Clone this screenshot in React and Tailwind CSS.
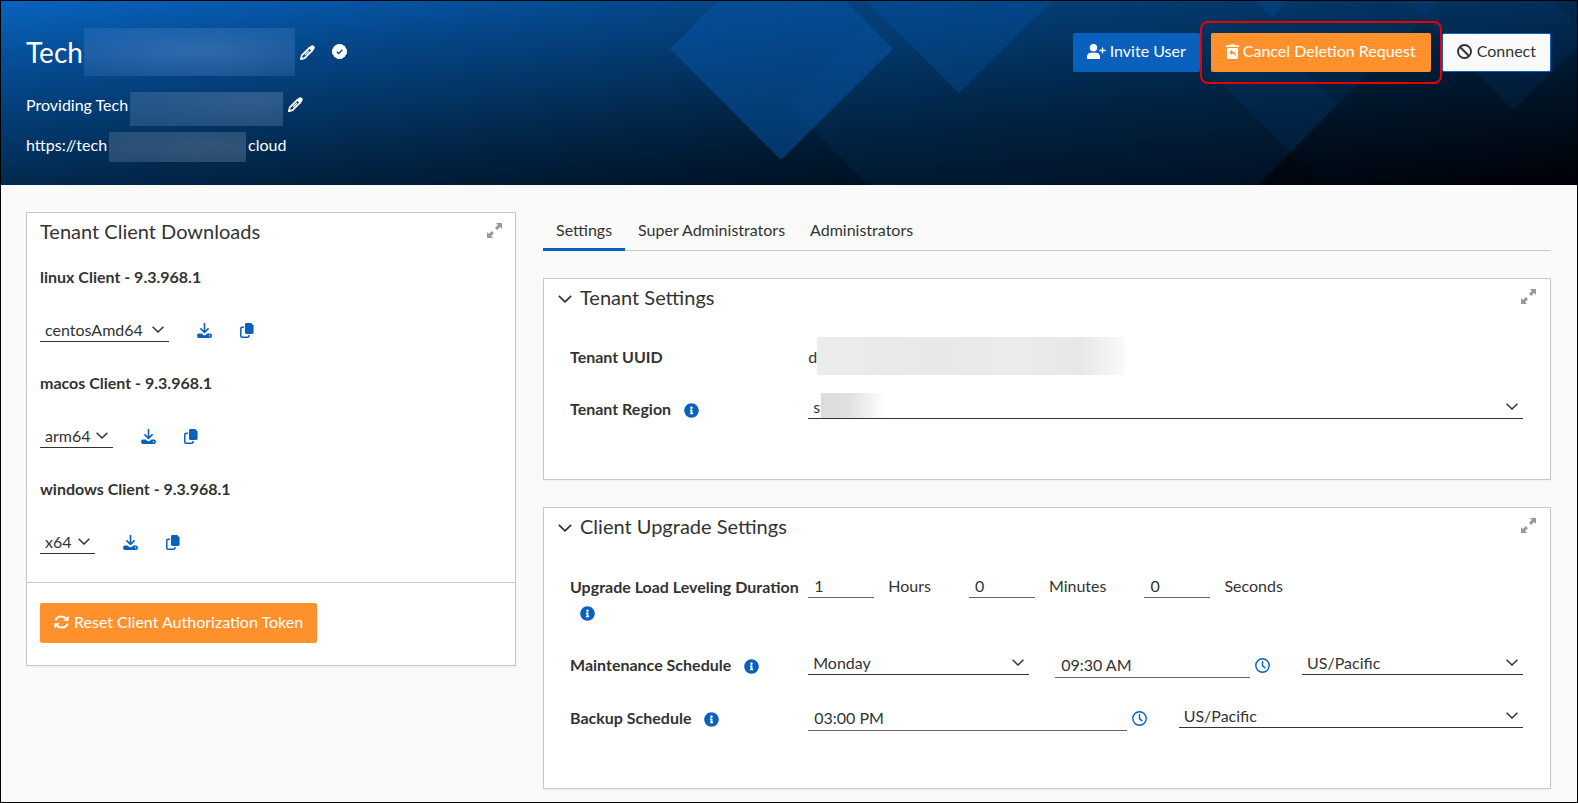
import React from "react";
import { FaInfoCircle } from "react-icons/fa";

function Pencil() {
  return (
    <svg viewBox="0 0 15 15" className="size-[15px]" aria-hidden="true">
      <path d="M0.9 14.1 L1.8 10.4 L9.6 2.6 L12.4 5.4 L4.6 13.2 Z" fill="none" stroke="currentColor" strokeWidth="1.7" strokeLinejoin="round" />
      <path d="M8.6 2.9 L10.9 0.8 Q12.6 -0.4 14 1 Q15.4 2.4 14.2 4.1 L12.1 6.4 Z" fill="currentColor" />
      <path d="M5 10 L9 6" stroke="currentColor" strokeWidth="1.1" />
      <path d="M0.2 14.8 L1.1 11.4 L3.6 13.9 Z" fill="currentColor" />
    </svg>
  );
}

function Verified() {
  return (
    <svg viewBox="0 0 15 15" className="size-[15px]" aria-hidden="true">
      <g fill="currentColor">
        <circle cx="7.5" cy="7.5" r="7" />
        <rect x="1.6" y="1.6" width="11.8" height="11.8" rx="1.8" transform="rotate(0 7.5 7.5)" />
        <rect x="1.6" y="1.6" width="11.8" height="11.8" rx="1.8" transform="rotate(30 7.5 7.5)" />
        <rect x="1.6" y="1.6" width="11.8" height="11.8" rx="1.8" transform="rotate(60 7.5 7.5)" />
      </g>
      <path d="M4.8 7.7 L6.7 9.5 L10.3 5.8" fill="none" stroke="#05478d" strokeWidth="1.3" />
    </svg>
  );
}

function UserPlus() {
  return (
    <svg viewBox="0 0 19 15" className="h-[15px] w-[19px]" fill="currentColor" aria-hidden="true">
      <circle cx="6.5" cy="3.7" r="3.7" />
      <path d="M0 15 V13.2 Q0 8.8 4.4 8.8 H8.6 Q13 8.8 13 13.2 V15 Z" />
      <path d="M15.5 3.4 V9.6 M12.4 6.5 H18.6" stroke="currentColor" strokeWidth="1.3" />
    </svg>
  );
}

function TrashRestore() {
  return (
    <svg viewBox="0 0 13 15" className="h-[15px] w-[13px]" aria-hidden="true">
      <path fill="currentColor" d="M0 1.2 H4 L4.6 0.2 H8.4 L9 1.2 H13 V2.9 H0 Z M1 4 H12 V13.3 Q12 15 10.3 15 H2.7 Q1 15 1 13.3 Z" />
      <path d="M3.2 8.4 L6 5.8 V7.5 Q9.9 7.6 9.8 12.4 Q8.8 9.7 6 9.6 V11.1 Z" fill="#ff912c" />
    </svg>
  );
}

function Ban() {
  return (
    <svg viewBox="0 0 15 15" className="size-[15px]" fill="none" stroke="currentColor" strokeWidth="1.9" aria-hidden="true">
      <circle cx="7.5" cy="7.5" r="6.5" />
      <path d="M3 3 L12 12" />
    </svg>
  );
}

function Expand() {
  return (
    <svg viewBox="0 0 15 15" className="size-[15px]" fill="currentColor" aria-hidden="true">
      <path d="M9 0 H15 V6 L13.1 4.1 L10.2 7 L8 4.8 L10.9 1.9 Z" />
      <path d="M6 15 H0 V9 L1.9 10.9 L4.8 8 L7 10.2 L4.1 13.1 Z" />
    </svg>
  );
}

function Download() {
  return (
    <svg viewBox="0 0 15 15" className="size-[15px]" aria-hidden="true">
      <path d="M7.5 0 V9 M3.4 5.4 L7.5 9.4 L11.6 5.4" fill="none" stroke="currentColor" strokeWidth="1.6" />
      <path fillRule="evenodd" fill="currentColor" d="M2 10.4 H4.6 L6.4 11.9 Q7.5 12.6 8.6 11.9 L10.4 10.4 H13 Q15 10.4 15 12.7 Q15 15 13 15 H2 Q0 15 0 12.7 Q0 10.4 2 10.4 Z M12.6 12 A0.7 0.7 0 1 0 12.6 13.4 A0.7 0.7 0 1 0 12.6 12 Z" />
    </svg>
  );
}

function Copy() {
  return (
    <svg viewBox="0 0 14 15" className="h-[15px] w-[14px]" aria-hidden="true">
      <path fill="currentColor" d="M6.4 0 H11.2 L13.6 2.4 V9.6 Q13.6 11 12.2 11 H6.4 Q5 11 5 9.6 V1.4 Q5 0 6.4 0 Z" />
      <path fill="none" stroke="currentColor" strokeWidth="1.5" d="M4 4.2 H2 Q0.8 4.2 0.8 5.4 V13 Q0.8 14.2 2 14.2 H7.8 Q9 14.2 9 13 V12" />
    </svg>
  );
}

function Refresh() {
  return (
    <svg viewBox="0 0 15 14" className="h-[14px] w-[15px]" aria-hidden="true">
      <path fill="none" stroke="currentColor" strokeWidth="2" d="M1.4 5.4 Q2.8 1.4 7.3 1.4 Q10.2 1.4 12.2 3.6 M13.6 8.6 Q12.2 12.6 7.7 12.6 Q4.8 12.6 2.8 10.4" />
      <path fill="currentColor" d="M14.6 0.6 V5.8 H9.4 Z M0.4 13.4 V8.2 H5.6 Z" />
    </svg>
  );
}

function Clock() {
  return (
    <svg viewBox="0 0 15 15" className="size-[15px]" fill="none" stroke="currentColor" strokeWidth="1.4" aria-hidden="true">
      <circle cx="7.5" cy="7.5" r="6.7" />
      <path d="M7.5 3 V7.6 L10.4 10.2" />
    </svg>
  );
}

function Chevron({ className }) {
  return (
    <svg viewBox="0 0 12 7" className={className} fill="none" stroke="currentColor" strokeWidth="1.5" aria-hidden="true">
      <path d="M0.6 0.7 L6 6 L11.4 0.7" />
    </svg>
  );
}

function Info({ label }) {
  return (
    <button type="button" aria-label={label} className="ml-[10px] inline-flex align-middle text-[#0960bd]">
      <FaInfoCircle className="size-[15px]" />
    </button>
  );
}

function Select({ id, label, options, className = "", children }) {
  return (
    <div className={`relative h-6 ${className}`}>
      <select id={id} aria-label={label} className="block h-6 w-full appearance-none border-b border-[#333] bg-transparent pl-[5px] pr-5 text-base leading-[22px] outline-none">
        {options.map((o) => (
          <option key={o}>{o}</option>
        ))}
      </select>
      {children}
      <Chevron className="pointer-events-none absolute right-[5px] top-2 h-[7px] w-3" />
    </div>
  );
}

function TimeField({ label, value }) {
  return (
    <div className="flex min-w-0 items-start">
      <input aria-label={label} defaultValue={value} className="h-[27px] min-w-0 flex-1 border-b border-[#666] bg-transparent px-[6px] text-base outline-none" />
      <button type="button" aria-label={`Pick ${label}`} className="flex h-7 w-[26px] items-center pl-[5px] text-[#0960bd]">
        <Clock />
      </button>
    </div>
  );
}

function ExpandButton() {
  return (
    <button type="button" aria-label="Expand panel" className="mt-[6px] text-[#999]">
      <Expand />
    </button>
  );
}

function Panel({ title, children }) {
  return (
    <section className="border border-[#c8c8c8] bg-white shadow-xs">
      <div className="flex items-start justify-between pl-[14px] pr-[14px] pt-1">
        <button type="button" className="flex items-center gap-2 text-[#333]">
          <Chevron className="mt-1 h-2 w-[14px]" />
          <h2 className="text-xl leading-7">{title}</h2>
        </button>
        <ExpandButton />
      </div>
      {children}
    </section>
  );
}

function Row({ children }) {
  return <div className="grid grid-cols-[1fr_3fr]">{children}</div>;
}

const clients = [
  { os: "linux", arch: "centosAmd64", width: "w-[129px]" },
  { os: "macos", arch: "arm64", width: "w-[73px]" },
  { os: "windows", arch: "x64", width: "w-[55px]" },
];

const durations = [
  ["Hours", "1"],
  ["Minutes", "0"],
  ["Seconds", "0"],
];

export default function App() {
  return (
    <div className="min-h-screen border border-black bg-[#fafafa] font-['Lato',sans-serif] text-base text-[#333]">
      <header className="relative bg-[linear-gradient(to_bottom_right,#0963bf_0%,#04478a_22%,#02294e_50%,#001c36_63%,#001224_76%,#000005_100%)] text-white">
        <svg className="absolute inset-0 h-full w-full" viewBox="0 0 1576 184" preserveAspectRatio="xMidYMin slice" aria-hidden="true">
          <polygon points="787,103 890,0 1440,0 1257,184 867,184" fill="#0a5ba8" opacity="0.12" />
          <polygon points="717,0 845,0 892,48 780,159 669,48" fill="#0656a8" opacity="0.5" />
          <polygon points="865,0 1051,0 958,92" fill="#0656a8" opacity="0.34" />
          <polygon points="1254,0 1288,0 1271,16" fill="#0656a8" opacity="0.25" />
          <polygon points="1270,38 1336,103 1290,151 1212,74" fill="#0656a8" opacity="0.12" />
          <polygon points="1405,0 1552,0 1576,22 1576,46 1512,109" fill="#0656a8" opacity="0.13" />
          <polygon points="1290,151 1323,184 1257,184" fill="#000" opacity="0.25" />
        </svg>
        <div className="relative flex items-start justify-between pb-[23px] pl-[25px] pr-[26px] pt-[27px]">
          <div>
            <div className="flex h-12 items-center">
              <h1 className="text-[28px] leading-10">Tech</h1>
              <span className="ml-px h-12 w-[211px] bg-[radial-gradient(ellipse_at_55%_50%,#6f9bdc66,#6f9bd826)]" />
              <button type="button" aria-label="Edit name" className="ml-[5px]"><Pencil /></button>
              <span className="-mt-0.5 ml-[17px]"><Verified /></span>
            </div>
            <div className="mt-4 flex h-[34px] items-start">
              <p className="leading-[26px]">Providing Tech</p>
              <span className="ml-0.5 h-[34px] w-[153px] bg-[radial-gradient(ellipse_at_80%_20%,#6f90b866,#5d83ac50)]" />
              <button type="button" aria-label="Edit description" className="ml-[5px] mt-[5px]"><Pencil /></button>
            </div>
            <div className="mt-[6px] flex h-[30px] items-start">
              <p className="leading-[26px]">https://tech</p>
              <span className="ml-0.5 h-[30px] w-[137px] bg-[radial-gradient(ellipse_at_75%_50%,#7088a470,#5c7a9a60)]" />
              <p className="ml-0.5 leading-[26px]">cloud</p>
            </div>
          </div>
          <div className="mt-[5px] flex gap-[11px]">
            <button type="button" className="flex h-[39px] items-center gap-1 rounded-xs bg-[#0960bd] px-[14px] pb-[3px]">
              <UserPlus /> Invite User
            </button>
            <div className="relative">
              <button type="button" className="flex h-[39px] items-center gap-1 rounded-xs bg-[#ff912c] px-[15px] pb-[3px]">
                <TrashRestore /> Cancel Deletion Request
              </button>
              <span className="pointer-events-none absolute -inset-x-[11px] -bottom-3 -top-3 rounded-lg border-2 border-[#e60000]" />
            </div>
            <button type="button" className="flex h-[39px] items-center gap-[5px] rounded-xs border border-[#0960bd] bg-[#fafafa] px-[14px] pb-[3px] text-[#333]">
              <Ban /> Connect
            </button>
          </div>
        </div>
      </header>

      <main className="grid grid-cols-[490fr_1008fr] items-start gap-[27px] pb-[10px] pl-[25px] pr-[26px] pt-[27px]">
        <section className="border border-[#c8c8c8] bg-white shadow-xs">
          <div className="flex items-start justify-between px-[13px] pt-1">
            <h2 className="text-xl leading-7">Tenant Client Downloads</h2>
            <ExpandButton />
          </div>
          <div className="flex flex-col gap-[29px] px-[13px] pb-[28px] pt-5">
            {clients.map(({ os, arch, width }) => (
              <div key={os}>
                <label htmlFor={os} className="block font-bold leading-6">{os} Client - 9.3.968.1</label>
                <div className="mt-[29px] flex items-center gap-[28px] text-[#0960bd]">
                  <Select id={os} options={[arch]} className={`${width} text-[#333]`} />
                  <button type="button" aria-label={`Download ${os} client`}><Download /></button>
                  <button type="button" aria-label={`Copy ${os} link`}><Copy /></button>
                </div>
              </div>
            ))}
          </div>
          <div className="border-t border-[#c8c8c8] px-[13px] pb-[22px] pt-5">
            <button type="button" className="flex h-10 items-center gap-[5px] rounded-xs bg-[#ff912c] px-[14px] pb-[3px] text-white">
              <Refresh /> Reset Client Authorization Token
            </button>
          </div>
        </section>

        <div>
          <nav className="flex h-[39px] border-b border-[#c8c8c8]">
            <button type="button" className="-mb-px border-b-[3px] border-[#0960bd] px-[13px]">Settings</button>
            <button type="button" className="px-[13px] pb-[2px]">Super Administrators</button>
            <button type="button" className="px-[12px] pb-[2px]">Administrators</button>
          </nav>

          <div className="mt-[27px] flex flex-col gap-[27px]">
            <Panel title="Tenant Settings">
              <div className="pb-[56px] pl-[26px] pr-[27px] pt-[26px]">
                <Row>
                  <span className="font-bold leading-10">Tenant UUID</span>
                  <div className="flex leading-10">
                    d<span className="h-[38px] w-[308px] bg-[linear-gradient(90deg,#ececec,#e8e8e8_40%,#ececec_65%,#e7e7e7_85%,#f9fafa)]" />
                  </div>
                </Row>
                <div className="mt-[18px]">
                  <Row>
                    <div className="leading-7">
                      <label htmlFor="region" className="mr-[3px] font-bold">Tenant Region</label>
                      <Info label="About tenant region" />
                    </div>
                    <Select id="region" options={["st"]}>
                      <span className="pointer-events-none absolute -top-[2px] left-[13px] h-[25px] w-[80px] bg-[linear-gradient(90deg,#dcdcdc,#e0e0e0_35%,#ffffff_80%)]" />
                    </Select>
                  </Row>
                </div>
              </div>
            </Panel>

            <Panel title="Client Upgrade Settings">
              <div className="flex flex-col gap-[25px] pb-[56px] pl-[26px] pr-[27px] pt-[34px]">
                <Row>
                  <div className="font-bold leading-[26px]">
                    <span className="whitespace-nowrap">Upgrade Load Leveling Duration</span>
                    <div className="flex h-[26px] items-center"><Info label="About load leveling" /></div>
                  </div>
                  <div className="flex h-6 gap-[38px]">
                    {durations.map(([unit, value]) => (
                      <label key={unit} className="flex items-center gap-[14px]">
                        <input defaultValue={value} className="h-6 w-[66px] border-b border-[#666] bg-transparent px-[6px] outline-none" />
                        {unit}
                      </label>
                    ))}
                  </div>
                </Row>
                <Row>
                  <div className="leading-7">
                    <span className="mr-[3px] font-bold">Maintenance Schedule</span>
                    <Info label="About maintenance schedule" />
                  </div>
                  <div className="grid grid-cols-3 gap-[26px]">
                    <Select label="Maintenance day" options={["Monday"]} />
                    <TimeField label="Maintenance time" value="09:30 AM" />
                    <Select label="Maintenance time zone" options={["US/Pacific"]} />
                  </div>
                </Row>
                <Row>
                  <div className="leading-7">
                    <span className="mr-[3px] font-bold">Backup Schedule</span>
                    <Info label="About backup schedule" />
                  </div>
                  <div className="grid grid-cols-2 gap-[26px]">
                    <TimeField label="Backup time" value="03:00 PM" />
                    <Select label="Backup time zone" options={["US/Pacific"]} />
                  </div>
                </Row>
              </div>
            </Panel>
          </div>
        </div>
      </main>
    </div>
  );
}
